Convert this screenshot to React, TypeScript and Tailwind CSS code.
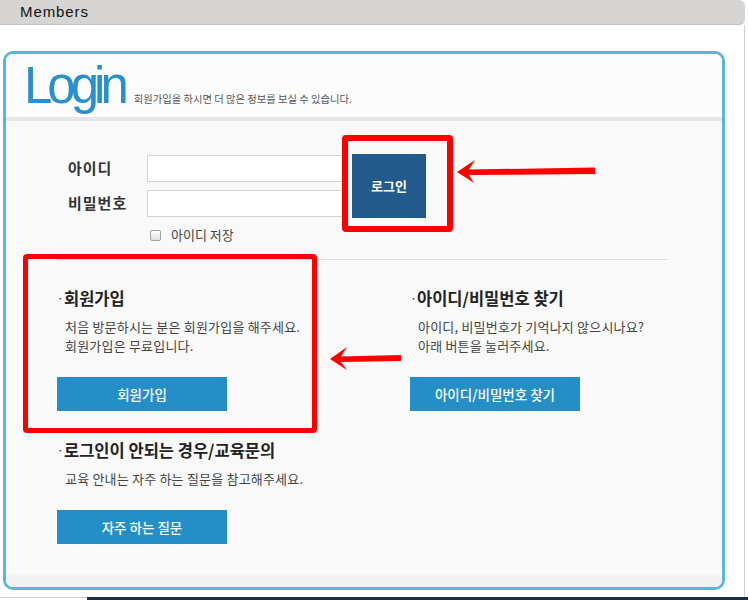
import React from "react";

const kr = "font-['Noto_Sans_CJK_KR','Noto_Sans',sans-serif]";

function Section({
  title,
  lines,
  button,
}: {
  title: string;
  lines: string[];
  button: string;
}) {
  return (
    <div className="flex flex-col">
      <h3 className="flex items-center h-[20px] text-[16.5px] font-bold text-[#222] leading-[20px]">
        <span className="w-[7px] text-[12px] font-normal">·</span>
        {title}
      </h3>
      <div className="mt-[9px] pl-[8px] text-[13px] leading-[19px] tracking-[0.2px] text-[#444]">
        {lines.map((l, i) => (
          <p key={i}>{l}</p>
        ))}
      </div>
      <button className="mt-[22px] w-[170px] h-[34px] bg-[#248fc7] text-white text-[13.5px] font-medium">
        {button}
      </button>
    </div>
  );
}

function Annotations() {
  return (
    <>
      <div className="absolute left-[342px] top-[135px] w-[111px] h-[97px] border-[6px] border-[#ff0000] rounded-[4px]" />
      <div className="absolute left-[23px] top-[254px] w-[294px] h-[179px] border-[5px] border-[#ff0000] rounded-[4px]" />
      <svg
        className="absolute left-0 top-0 pointer-events-none"
        width="748"
        height="600"
        viewBox="0 0 748 600"
      >
        <path
          d="M457 172 L475 160 L469 169.5 L595 167.5 L595 174 L469 175 L474 183 Z"
          fill="#ff0000"
        />
        <path
          d="M330 359 L347 347 L341 356.5 L401 355 L401 361 L341 362 L347 370 Z"
          fill="#ff0000"
        />
      </svg>
    </>
  );
}

export default function App() {
  return (
    <div className={`relative w-[748px] h-[600px] bg-white flex flex-col overflow-hidden ${kr}`}>
      {/* top bar */}
      <div className="h-[25px] w-[745px] bg-[#d6d5d3] rounded-r-[6px] border-b border-[#c2c2c2] flex items-center pl-[20px] shrink-0">
        <span className="font-['Liberation_Sans',Arial,sans-serif] text-[15px] tracking-[0.9px] text-[#111]">
          Members
        </span>
      </div>

      {/* content */}
      <div className="w-[745px] flex-1 border-r border-[#cfcfcf] pt-[26px] pl-[3px]">
        <div className="w-[722px] border-[3px] border-[#58b7df] rounded-[10px] overflow-hidden">
          {/* header */}
          <div className="h-[63px] bg-[#fdfcfd] pt-[6px] pl-[18px] flex items-baseline">
            <span className="font-['Liberation_Sans',Arial,sans-serif] text-[51px] leading-[51px] text-[#2a8fcd] tracking-[-5px]">
              Login
            </span>
            <span className="ml-[10px] text-[10.3px] text-[#555]">
              회원가입을 하시면 더 많은 정보를 보실 수 있습니다.
            </span>
          </div>
          <div className="h-[4px] bg-[#e6e6e6]" />

          {/* body */}
          <div className="h-[453px] bg-[#f9f9f9] pt-[33px]">
            <div className="ml-[62px] flex">
              <div className="pt-[1px] flex flex-col">
                <div className="flex items-center h-[27px]">
                  <label className="w-[79px] text-[15px] tracking-[1px] font-bold text-[#333]">아이디</label>
                  <input className="w-[198px] h-[27px] bg-white border border-[#cfd3da] outline-none" />
                </div>
                <div className="flex items-center h-[27px] mt-[8px]">
                  <label className="w-[79px] text-[15px] tracking-[1px] font-bold text-[#333]">비밀번호</label>
                  <input
                    type="password"
                    className="w-[198px] h-[27px] bg-white border border-[#cfd3da] outline-none"
                  />
                </div>
                <div className="flex items-center h-[12px] mt-[12px] ml-[82px]">
                  <span className="w-[11px] h-[11px] border border-[#a0a0a0] rounded-[2px] bg-gradient-to-b from-white to-[#dedede]" />
                  <span className="ml-[10px] text-[13px] text-[#444] leading-[12px]">아이디 저장</span>
                </div>
              </div>
              <button className="ml-[7px] w-[74px] h-[64px] bg-[#215a8b] text-white text-[13px] font-bold">
                로그인
              </button>
            </div>

            <div className="ml-[51px] mt-[18px] w-[610px] h-[1px] bg-[#dddddd]" />

            <div className="ml-[51px] mt-[28px] flex">
              <div className="w-[353px] flex flex-col">
                <Section
                  title="회원가입"
                  lines={["처음 방문하시는 분은 회원가입을 해주세요.", "회원가입은 무료입니다."]}
                  button="회원가입"
                />
                <div className="mt-[29px]">
                  <Section
                    title="로그인이 안되는 경우/교육문의"
                    lines={["교육 안내는 자주 하는 질문을 참고해주세요."]}
                    button="자주 하는 질문"
                  />
                </div>
              </div>
              <Section
                title="아이디/비밀번호 찾기"
                lines={["아이디, 비밀번호가 기억나지 않으시나요?", "아래 버튼을 눌러주세요."]}
                button="아이디/비밀번호 찾기"
              />
            </div>
          </div>
          <div className="h-[13px] bg-[#f3f3f3]" />
        </div>
      </div>

      {/* bottom strip */}
      <div className="h-[3px] flex shrink-0">
        <div className="w-[87px] border-t border-[#cccccc]" />
        <div className="flex-1 bg-[#1d2f3b]" />
      </div>

      <Annotations />
    </div>
  );
}
